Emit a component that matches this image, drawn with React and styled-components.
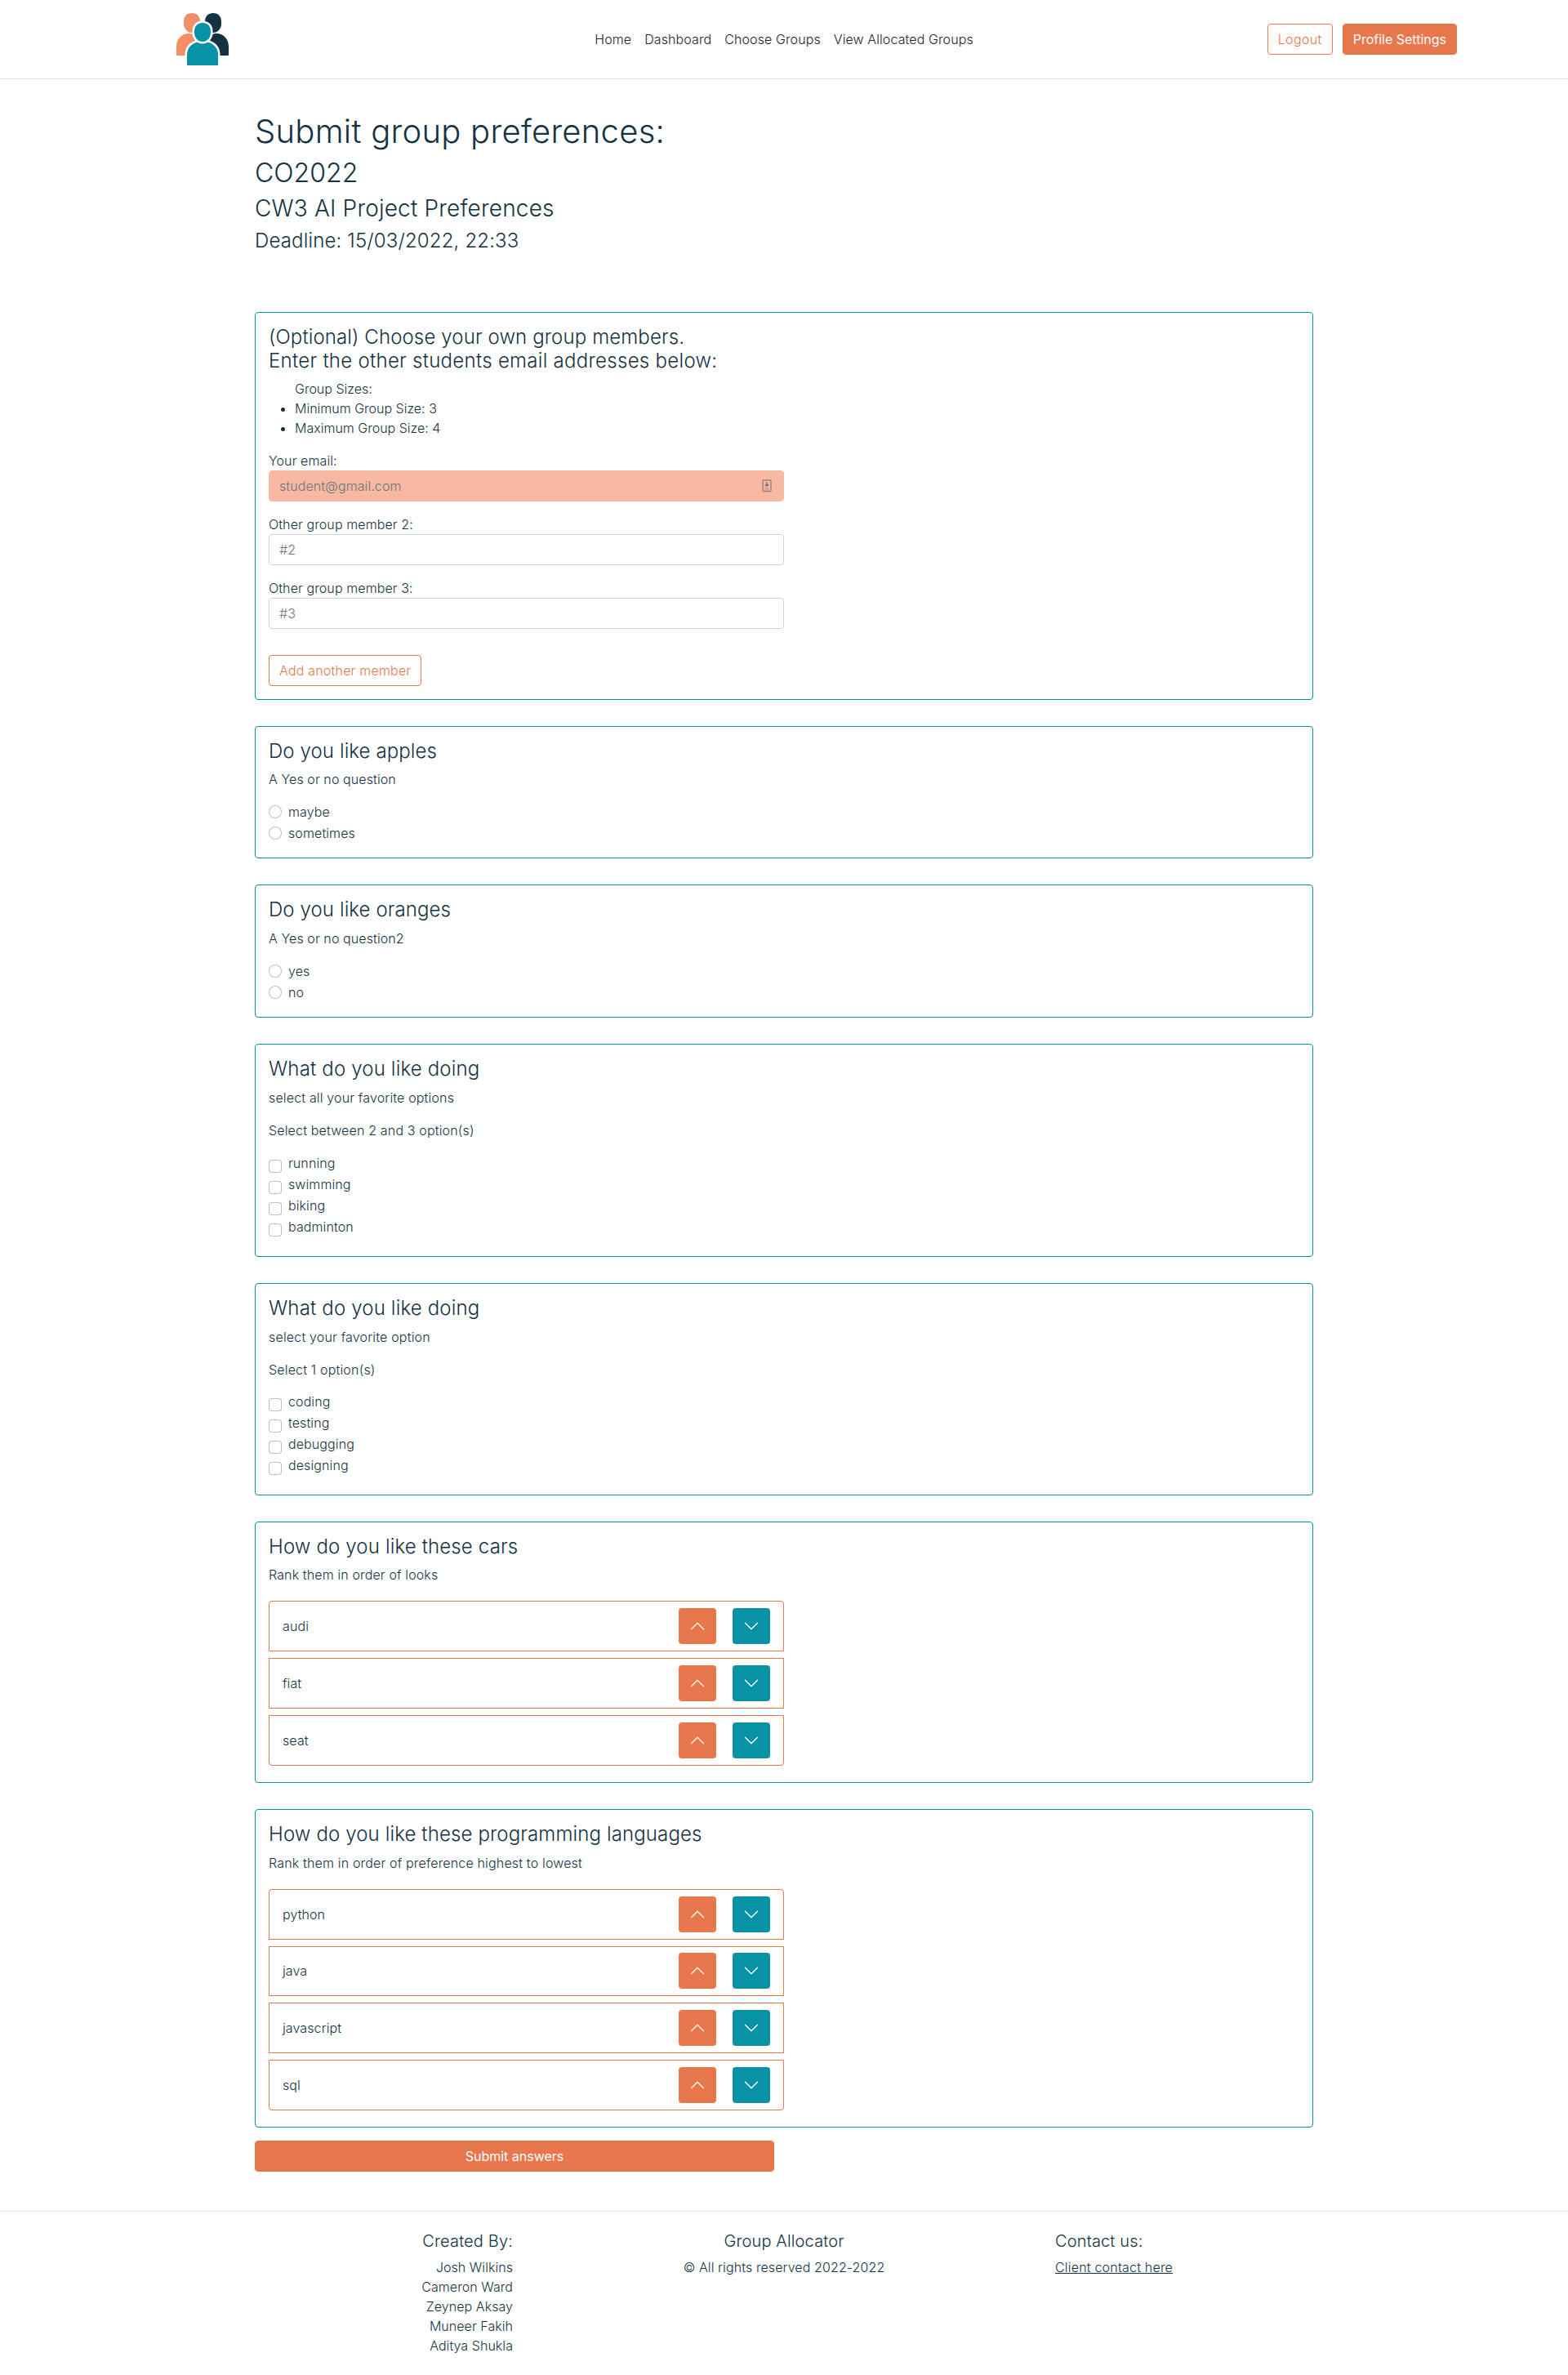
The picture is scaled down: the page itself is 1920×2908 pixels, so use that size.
import React from "react";
import styled, { createGlobalStyle, css } from "styled-components";
import { BsChevronUp, BsChevronDown } from "react-icons/bs";

const navy = "#153243";
const teal = "#0892a5";
const orange = "#e8774c";

const GlobalStyle = createGlobalStyle`
  *, *::before, *::after { box-sizing: border-box; }
  body {
    margin: 0;
    background: #fff;
    color: ${navy};
    font: 300 16px/24px Inter, "Liberation Sans", sans-serif;
    letter-spacing: 0.1px;
  }
  h1, h2, h3, h4, h5, p, ul { margin: 0; font-weight: 300; }
  input, button { font: inherit; letter-spacing: inherit; }
`;

const tracked = css`
  ${(p) => p.$track !== undefined && css`letter-spacing: ${p.$track}px;`}
`;

const Header = styled.header`
  display: grid;
  grid-template-columns: 1fr auto 1fr;
  align-items: center;
  height: 97px;
  padding: 0 136px 0 216px;
  border-bottom: 1px solid #dee2e6;
`;
const Logo = styled.svg`
  display: block;
  width: 64px;
  height: 64px;
`;
const Nav = styled.nav`
  display: flex;
  gap: 16px;
  margin-left: -80px;
`;
const NavLink = styled.a`
  color: #212529;
  text-decoration: none;
`;
const HeaderActions = styled.div`
  display: flex;
  justify-content: flex-end;
  gap: 12px;
`;
const Button = styled.button`
  height: 38px;
  padding: 6px 12px;
  border: 1px solid ${orange};
  border-radius: 4px;
  background: ${(p) => (p.$outline ? "transparent" : orange)};
  color: ${(p) => (p.$outline ? orange : "#fff")};
  font-weight: ${(p) => (p.$outline ? 300 : 400)};
  letter-spacing: ${(p) => (p.$outline ? 0.2 : 0)}px;
  line-height: 24px;
  white-space: nowrap;
  ${tracked}
  ${(p) => p.$wide && css`display: block; width: 636px;`}
`;

const Main = styled.main`
  width: 1296px;
  margin: 0 auto;
  padding: 40px 0 48px;
`;
const Intro = styled.div`
  height: 245px;
`;
const H1 = styled.h1`
  margin-bottom: 8px;
  font-size: 40px;
  line-height: 48px;
  ${tracked}
`;
const H2 = styled.h2`
  margin-bottom: 8px;
  font-size: 32px;
  line-height: 38.4px;
  letter-spacing: 0;
`;
const H3 = styled.h3`
  margin-bottom: 8px;
  font-size: 28px;
  line-height: 33.6px;
  ${tracked}
`;
const H4 = styled.h4`
  margin-bottom: ${(p) => p.$gap || 8.2}px;
  font-size: 24px;
  line-height: 28.8px;
  ${tracked}
`;
const Tracked = styled.span`
  ${tracked}
`;
const H5 = styled.h5`
  margin-bottom: 8px;
  font-size: 20px;
  line-height: 24px;
  letter-spacing: 0.15px;
`;

const Cards = styled.div`
  display: flex;
  flex-direction: column;
  gap: 32px;
  margin-bottom: 16px;
`;
const Card = styled.section`
  height: ${(p) => p.$height}px;
  padding: 16px;
  border: 1px solid ${teal};
  border-radius: 4px;
`;
const Text = styled.p`
  margin-bottom: 16px;
  ${tracked}
`;
const Sizes = styled.ul`
  padding-left: 32px;
  margin-bottom: 16px;
  letter-spacing: 0;
`;
const Field = styled.label`
  display: block;
  width: 50%;
  margin-bottom: 16px;
`;
const InputBox = styled.span`
  display: flex;
  align-items: center;
  height: 38px;
  padding: 0 14px 0 12px;
  border: 1px solid ${(p) => (p.$own ? "#f7b9a2" : "#ced4da")};
  border-radius: 4px;
  background: ${(p) => (p.$own ? "#f7b9a2" : "#fff")};
`;
const Input = styled.input`
  flex: 1;
  min-width: 0;
  padding: 0;
  border: 0;
  outline: 0;
  background: transparent;
  &::placeholder { color: #6c757d; opacity: 1; }
`;
const AddRow = styled.div`
  padding-top: 16px;
`;

const Options = styled.div`
  margin-top: ${(p) => -(p.$lift || 0)}px;
`;
const Option = styled.label`
  display: flex;
  align-items: flex-start;
  gap: 8px;
  height: 24px;
  margin-bottom: 2px;
`;
const Choice = styled.input`
  appearance: none;
  flex: none;
  width: 16px;
  height: 16px;
  margin: ${(p) => (p.type === "radio" ? 4 : 8)}px 0 0;
  border: 1px solid rgba(0, 0, 0, 0.25);
  border-radius: ${(p) => (p.type === "radio" ? "50%" : "4px")};
  background: #fff;
`;

const RankList = styled.div`
  display: flex;
  flex-direction: column;
  gap: 8px;
  width: 50%;
  padding-top: 4px;
`;
const RankItem = styled.div`
  display: flex;
  align-items: center;
  gap: 20px;
  height: ${(p) => (p.$short ? 61 : 62)}px;
  padding: 0 16px;
  border: 1px solid ${orange};
  &:first-child { border-radius: 4px 4px 0 0; }
  &:last-child { border-radius: 0 0 4px 4px; }
`;
const RankName = styled.span`
  flex: 1;
`;
const RankButton = styled.button`
  display: flex;
  align-items: center;
  justify-content: center;
  width: 46px;
  height: 44px;
  padding: 0;
  border: 0;
  border-radius: 4px;
  background: ${(p) => (p.$down ? teal : orange)};
  color: #fff;
`;

const Footer = styled.footer`
  display: flex;
  justify-content: center;
  padding: 24px 0;
  border-top: 1px solid #dfe1e2;
`;
const FooterColumn = styled.div`
  width: ${(p) => (p.$wide ? 664 : 328)}px;
  text-align: ${(p) => p.$align};
`;
const Author = styled.p`
  letter-spacing: 0.05px;
`;
const ContactLink = styled.a`
  color: ${navy};
  letter-spacing: 0.2px;
  text-decoration: underline;
`;

function GroupLogo() {
  return (
    <Logo viewBox="0 0 64 64">
      <path fill="#f28f68" d="M9 10C9 4 13 0 19 0s10 4 10 10v3c0 6-4 11-10 11S9 19 9 13zM0 51V41c0-9 6-16 15-16 8 0 14 7 14 16v11H1q-1 0-1-1z" />
      <path fill={navy} d="M35 10c0-6 4-10 10-10s10 4 10 10v3c0 6-4 11-10 11s-10-5-10-11zM35 52V41c0-9 6-16 14-16 9 0 15 7 15 16v10q0 1-1 1z" />
      <path fill={teal} stroke="#fff" strokeWidth="5" paintOrder="stroke" d="M13 63V51c0-7 4-12.500 11-15h16c7 2.500 11 8 11 15v12q0 1-1 1H14q-1 0-1-1z" />
      <path fill={teal} stroke="#fff" strokeWidth="5" paintOrder="stroke" d="M22 22c0-6 4-10 10-10s10 4 10 10v2c0 6-4 11-10 11s-10-5-10-11z" />
    </Logo>
  );
}

function AutofillIcon() {
  return (
    <svg width="12" height="16" viewBox="0 0 12 16">
      <rect x="1.200" y="1" width="9.800" height="13.500" rx="0.800" fill="none" stroke="#94857e" strokeWidth="1.400" />
      <circle cx="6" cy="4.500" r="1" fill="#6f6b69" />
      <path d="M4 8V7q0-1.500 2-1.500T8 7v1z" fill="#6f6b69" />
      <path d="M4 10h4M4 12h4" stroke="#a8938a" strokeWidth="1" />
    </svg>
  );
}

function Question({ title, text, limit, type, options, height, gap, lift, track, textTrack }) {
  return (
    <Card $height={height}>
      <H4 $gap={gap} $track={track}>{title}</H4>
      <Text $track={textTrack}>{text}</Text>
      {limit && <Text $track={textTrack}>{limit}</Text>}
      <Options $lift={lift}>
        {options.map((o) => (
          <Option key={o}>
            <Choice type={type} name={title} />
            {o}
          </Option>
        ))}
      </Options>
    </Card>
  );
}

function Ranking({ title, text, items, height, gap, shortRow, track, textTrack }) {
  return (
    <Card $height={height}>
      <H4 $gap={gap} $track={track}>{title}</H4>
      <Text $track={textTrack}>{text}</Text>
      <RankList>
        {items.map((item, i) => (
          <RankItem key={item} $short={i === shortRow}>
            <RankName>{item}</RankName>
            <RankButton><BsChevronUp size={20} /></RankButton>
            <RankButton $down><BsChevronDown size={20} /></RankButton>
          </RankItem>
        ))}
      </RankList>
    </Card>
  );
}

const authors = ["Josh Wilkins", "Cameron Ward", "Zeynep Aksay", "Muneer Fakih", "Aditya Shukla"];

export default function App() {
  return (
    <>
      <GlobalStyle />
      <Header>
        <GroupLogo />
        <Nav>
          {["Home", "Dashboard", "Choose Groups", "View Allocated Groups"].map((l) => (
            <NavLink key={l}>{l}</NavLink>
          ))}
        </Nav>
        <HeaderActions>
          <Button $outline $track={0.35}>Logout</Button>
          <Button>Profile Settings</Button>
        </HeaderActions>
      </Header>
      <Main>
        <Intro>
          <H1 $track={0.26}>Submit group preferences:</H1>
          <H2>CO2022</H2>
          <H3 $track={0.18}>CW3 AI Project Preferences</H3>
          <H4 $track={0.15}>Deadline: 15/03/2022, 22:33</H4>
        </Intro>
        <Cards>
          <Card $height={475}>
            <H4 $gap={7.4} $track={0.12}>
              (Optional) Choose your own group members.
              <br />
              <Tracked $track={0.29}>Enter the other students email addresses below:</Tracked>
            </H4>
            <Sizes>
              Group Sizes:
              <li>Minimum Group Size: 3</li>
              <li>Maximum Group Size: 4</li>
            </Sizes>
            <Field>
              Your email:
              <InputBox $own>
                <Input placeholder="student@gmail.com" readOnly />
                <AutofillIcon />
              </InputBox>
            </Field>
            {[2, 3].map((n) => (
              <Field key={n}>
                Other group member {n}:
                <InputBox>
                  <Input placeholder={`#${n}`} />
                </InputBox>
              </Field>
            ))}
            <AddRow>
              <Button $outline>Add another member</Button>
            </AddRow>
          </Card>
          <Question
            height={162}
            gap={7.2}
            title="Do you like apples"
            text="A Yes or no question"
            type="radio"
            options={["maybe", "sometimes"]}
          />
          <Question
            height={163}
            title="Do you like oranges"
            text="A Yes or no question2"
            type="radio"
            options={["yes", "no"]}
          />
          <Question
            height={261}
            track={0.17}
            textTrack={0.16}
            title="What do you like doing"
            text="select all your favorite options"
            limit="Select between 2 and 3 option(s)"
            type="checkbox"
            options={["running", "swimming", "biking", "badminton"]}
          />
          <Question
            height={260}
            lift={1}
            track={0.17}
            textTrack={0.18}
            title="What do you like doing"
            text="select your favorite option"
            limit="Select 1 option(s)"
            type="checkbox"
            options={["coding", "testing", "debugging", "designing"]}
          />
          <Ranking
            height={320}
            gap={7.2}
            track={0.15}
            textTrack={0.13}
            title="How do you like these cars"
            text="Rank them in order of looks"
            items={["audi", "fiat", "seat"]}
          />
          <Ranking
            height={390}
            shortRow={1}
            track={0.13}
            textTrack={0.165}
            title="How do you like these programming languages"
            text="Rank them in order of preference highest to lowest"
            items={["python", "java", "javascript", "sql"]}
          />
        </Cards>
        <Button $wide>Submit answers</Button>
      </Main>
      <Footer>
        <FooterColumn $align="right">
          <H5>Created By:</H5>
          {authors.map((a) => (
            <Author key={a}>{a}</Author>
          ))}
        </FooterColumn>
        <FooterColumn $wide $align="center">
          <H5>Group Allocator</H5>
          <p>© All rights reserved 2022-2022</p>
        </FooterColumn>
        <FooterColumn $align="left">
          <H5>Contact us:</H5>
          <ContactLink>Client contact here</ContactLink>
        </FooterColumn>
      </Footer>
    </>
  );
}
